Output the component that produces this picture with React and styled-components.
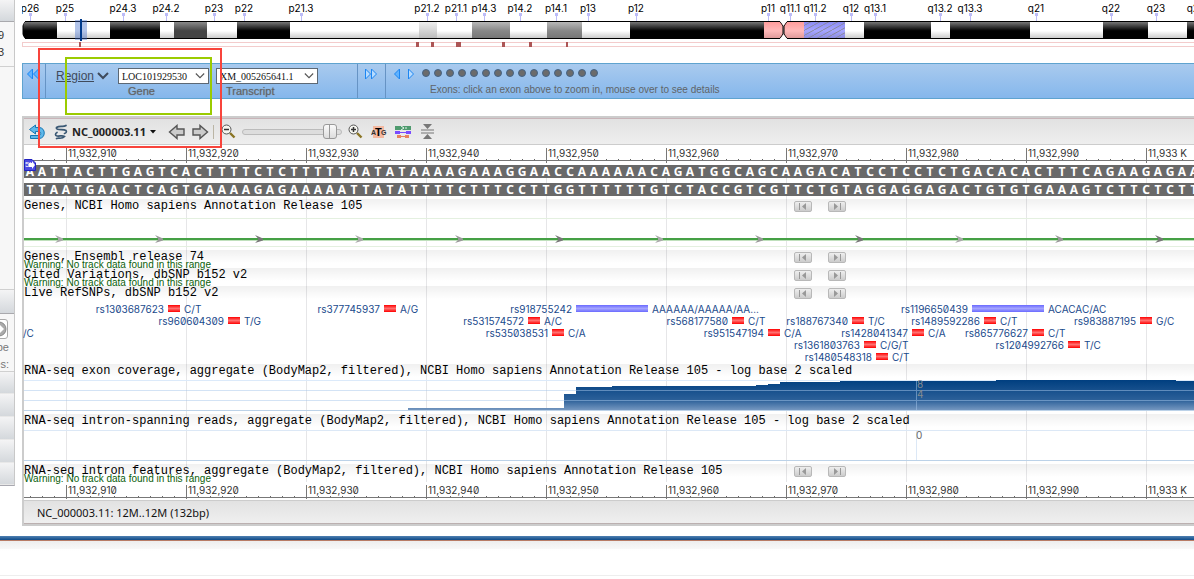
import React from "react";
import styled, { createGlobalStyle } from "styled-components";

const SANS = '"Liberation Sans", Arial, sans-serif';
const HUMAN = '"Noto Sans", Tahoma, sans-serif';
const MONO = '"Liberation Mono", "Courier New", monospace';
const TINY = 'Inter, "DejaVu Sans", sans-serif';

const GlobalStyle = createGlobalStyle`
  * { box-sizing: border-box; }
  body { margin: 0; background: #fff; font-family: ${SANS}; overflow: hidden; }
  button, select, input { margin: 0; padding: 0; font: inherit; }
`;

const Upper = styled.div`
  display: flex;
  align-items: flex-start;
  gap: 7px;
  height: 536px;
`;

/* ---------- left side panel ---------- */
const Side = styled.aside`
  flex: 0 0 15px;
  overflow: hidden;
  background: #f7f7f7;
  border-right: 1px solid #c8c8c8;
  border-bottom: 1px solid #a8a8b0;
`;
const SideHead = styled.div`
  height: ${(p) => p.$h}px;
  background: linear-gradient(#f4f4f5, #d4d8dc);
  border-bottom: 1px solid ${(p) => (p.$dark ? "#a9a9ad" : "#e8e8e8")};
`;
const SideBody = styled.div`
  display: flex;
  flex-direction: column;
  height: ${(p) => p.$h}px;
  padding-top: ${(p) => p.$top || 0}px;
  border-bottom: 1px solid #d0d0d0;
  color: ${(p) => p.$color};
  font-size: 11px;
  line-height: 17px;
  overflow: hidden;
`;
const SideText = styled.span`
  align-self: flex-end;
  margin-right: ${(p) => p.$r}px;
  white-space: nowrap;
`;
const GoButton = styled.button`
  display: flex;
  justify-content: flex-end;
  align-items: center;
  width: 30px;
  height: 20px;
  margin-left: -22px;
  flex: none;
  background: #fff;
  border: 1px solid #aaa;
  border-radius: 3px;
`;

/* ---------- main column ---------- */
const Main = styled.main`
  flex: 1;
  min-width: 0;
  overflow: hidden;
  position: relative;
`;
const Ideo = styled.svg`
  display: block;
  width: 100%;
  height: 63px;
  font: 10px ${TINY};
`;

const GeneBar = styled.div`
  display: flex;
  height: 36px;
  background: linear-gradient(#a9caee, #85b7ec);
  border: 1px solid #5fa3cf;
  border-right: 0;
  color: #5f6468;
  font-size: 11px;
`;
const BarPart = styled.div`
  display: flex;
  flex: ${(p) => (p.$w ? `0 0 ${p.$w}px` : "1")};
  gap: ${(p) => p.$gap || 0}px;
  padding: 2px 0 0 ${(p) => p.$pad}px;
  border-right: ${(p) => (p.$w ? "1px solid #6693c4" : "0")};
`;
const FieldGroup = styled.div`
  display: flex;
  gap: 7px;
  padding-top: 2px;
  margin-top: -2px;
`;
const BarButton = styled.button`
  display: flex;
  height: 16px;
  background: none;
  border: 0;
`;
const RegionButton = styled.button`
  display: flex;
  gap: 3px;
  height: 20px;
  width: 62px;
  background: none;
  border: 0;
  color: #3f4b5c;
  font-size: 12px;
  line-height: 20px;
  text-decoration: underline;
  svg { margin-top: 6px; flex: none; }
`;
const Field = styled.label`
  display: flex;
  flex-direction: column;
  width: ${(p) => p.$w}px;
  margin-top: 2px;
  line-height: 14px;
  text-shadow: 0 0 1px #7d8084;
  position: relative;
  svg { position: absolute; right: 4px; top: 4px; pointer-events: none; }
`;
const FieldName = styled.span`
  padding-left: 10px;
  order: 2;
`;
const Select = styled.select`
  appearance: none;
  height: 16px;
  width: 100%;
  padding-left: 3px;
  border: 1px solid #5c6874;
  border-radius: 0;
  background: #fff;
  color: #111;
  font: 10px "Liberation Serif", serif;
`;
const ExonCol = styled.div`
  display: flex;
  flex-direction: column;
  gap: 6px;
  padding: 3px 0 0 0;
  font-size: 10px;
  line-height: 12px;
`;
const ExonDots = styled.div`
  display: flex;
  gap: 4px;
  height: 9px;
`;
const ExonDot = styled.button`
  width: 8px;
  height: 8px;
  background: #6b6b6b;
  border: 1px solid #456384;
  border-radius: 50%;
`;
const ExonHint = styled.span`
  padding-left: 8px;
  white-space: nowrap;
`;

/* ---------- sequence viewer ---------- */
const Viewer = styled.section`
  margin-top: 17px;
  border: 2px solid #ccc;
  border-right: 0;
  position: relative;
`;
const Toolbar = styled.div`
  display: flex;
  align-items: center;
  height: 27px;
  padding-left: 5px;
  background: linear-gradient(#e2e2e2, #eee);
  border-top: 1px solid #c8b4b8;
  border-bottom: 1px solid #ccc;
`;
const ToolButton = styled.button`
  display: flex;
  align-items: center;
  gap: 4px;
  margin-right: ${(p) => p.$r}px;
  background: none;
  border: 0;
  color: #222;
  font: bold 11px ${HUMAN};
`;
const Separator = styled.span`
  width: 1px;
  height: 14px;
  margin-right: 7px;
  background: #bbb5a5;
`;
const Slider = styled.input`
  appearance: none;
  width: 100px;
  height: 16px;
  margin-right: 6px;
  background: none;
  &::-webkit-slider-runnable-track {
    height: 6px;
    background: #ddd;
    border: 1px solid #bbb;
    border-radius: 3px;
  }
  &::-webkit-slider-thumb {
    appearance: none;
    width: 14px;
    height: 15px;
    margin-top: -6px;
    border: 1px solid #999;
    border-radius: 3px;
    background: linear-gradient(90deg, transparent 5px, #999 5px 6px, transparent 6px), linear-gradient(#fafafa, #ddd);
  }
`;

const Ruler = styled.div`
  display: flex;
  height: ${(p) => p.$h}px;
  padding: 3px 0 0 42px;
  overflow: hidden;
  background:
    linear-gradient(#777, #777) 0 15px / 100% 1px no-repeat,
    linear-gradient(90deg, transparent 6px, #666 6px 7px, transparent 7px) 0 14px / 12px 1px repeat-x,
    #fff;
`;
const Mark = styled.span`
  flex: 0 0 120px;
  height: ${(p) => p.$h}px;
  padding-left: 1px;
  border-left: 1px solid #777;
  color: #333;
  font: 10px/10px ${TINY};
  font-feature-settings: "zero";
`;
const Canvas = styled.div`
  position: relative;
  background: linear-gradient(90deg, #e6e6e8 1px, transparent 1px) 42px 0 / 120px 100%;
`;
const Strand = styled.div`
  display: flex;
  height: 13px;
  margin-bottom: ${(p) => p.$b}px;
  background: #696969;
  color: #fff;
  font: bold 12px/14px ${HUMAN};
`;
const Base = styled.span`
  flex: 0 0 12px;
  text-align: center;
`;
const FivePrime = styled.svg`
  position: absolute;
  left: 0;
  top: 41px;
  z-index: 1;
`;
const Track = styled.div`
  height: ${(p) => p.$h}px;
`;
const TrackHead = styled.div`
  display: flex;
  height: ${(p) => p.$h || 13}px;
  background: linear-gradient(rgba(0, 0, 0, 0.06), transparent 13px);
`;
const TrackName = styled.span`
  min-width: 770px;
  color: #000;
  font: 12px/15px ${MONO};
  white-space: nowrap;
`;
const NavButton = styled.button`
  display: flex;
  justify-content: center;
  align-items: center;
  width: 18px;
  height: 11px;
  margin: 2px 16px 0 0;
  background: linear-gradient(#eee, #ccc);
  border: 1px solid #b8b8b8;
  border-radius: 2px;
`;
const Warning = styled.div`
  height: 5px;
  color: #0a600a;
  font: 10px/4px ${SANS};
`;
const Plot = styled.svg`
  display: block;
  width: 100%;
  font: 10px ${TINY};
`;
const Lanes = styled.div`
  height: 62px;
  padding-top: 2px;
`;
const Lane = styled.div`
  position: relative;
  height: 12px;
`;
const Snp = styled.div`
  position: absolute;
  top: 2px;
  height: 7px;
  background: ${(p) =>
    p.$long ? "linear-gradient(#6a6aff, #a4a4ff 50%, #6a6aff)" : "linear-gradient(#f00, #ff7070 50%, #f00)"};
  color: #1a4a8c;
  font: 10px/8px ${TINY};
  font-feature-settings: "zero";
`;
const SnpId = styled.a`
  position: absolute;
  right: calc(100% + 4px);
  color: inherit;
  text-decoration: none;
`;
const Allele = styled.span`
  position: absolute;
  left: calc(100% + 4px);
  white-space: nowrap;
`;
const Status = styled.div`
  height: 24px;
  padding-left: 13px;
  background: linear-gradient(#e2e2e2, #efefef);
  border-top: 1px solid #ccc;
  border-bottom: 1px solid #bbb0b0;
  color: #111;
  font: 11px/24px ${HUMAN};
`;
const Highlight = styled.div`
  position: absolute;
  left: ${(p) => p.$x}px;
  top: ${(p) => p.$y}px;
  width: ${(p) => p.$w}px;
  height: ${(p) => p.$h}px;
  border: 2px solid ${(p) => p.$c};
  pointer-events: none;
  z-index: 2;
`;
const Footer = styled.footer`
  height: 43px;
  background:
    linear-gradient(#4f80b2, #0f4a88) 0 0 / 100% 4px no-repeat,
    linear-gradient(#b87c66, #b87c66) 0 4px / 100% 1px no-repeat,
    linear-gradient(#eee, #f8f8f8) 0 5px / 100% 8px no-repeat,
    linear-gradient(#eee, #eee) 0 39px / 100% 1px no-repeat,
    linear-gradient(#fafafa, #fff 16px);
`;

/* ---------- data ---------- */
const BANDS = [
  [1, 34, "k"], [35, 53, "w"], [88, 50, "k"], [138, 14, "w"], [152, 33, "d"], [185, 30, "w"],
  [215, 53, "k"], [268, 129, "w"], [397, 18, "l"], [415, 35, "w"], [450, 38, "g"], [488, 37, "w"],
  [525, 35, "g"], [560, 48, "w"], [608, 134, "k"], [742, 19, "p"], [762, 20, "p"], [782, 41, "h"],
  [823, 19, "w"], [842, 67, "k"], [909, 19, "w"], [928, 80, "k"], [1008, 73, "w"], [1081, 45, "k"],
  [1126, 39, "w"], [1165, 60, "k"],
];
const SHADES = {
  k: ["#777", "#000", "#000"], w: ["#fff", "#fff", "#ccc"], d: ["#8a8a8a", "#444", "#444"],
  l: ["#eee", "#d4d4d4", "#bbb"], g: ["#b8b8b8", "#888", "#777"], p: ["#ff9c9c", "#ffb9b9", "#e09a9a"],
  h: ["#8c8cf4", "#a6a6ff", "#8c8ce0"],
};
const BAND_NAMES = [
  ["p26", 8], ["p25", 43], ["p24.3", 101], ["p24.2", 144], ["p23", 192], ["p22", 222], ["p21.3", 279],
  ["p21.2", 405], ["p21.1", 434], ["p14.3", 462], ["p14.2", 498], ["p14.1", 534], ["p13", 566],
  ["p12", 614], ["p11", 746], ["q11.1", 768], ["q11.2", 793], ["q12", 829], ["q13.1", 853],
  ["q13.2", 918], ["q13.3", 948], ["q21", 1014], ["q22", 1089], ["q23", 1134], ["q24", 1174],
];
const HITS = [[57, 2], [394, 3], [409, 3], [434, 5], [480, 3], [507, 3], [544, 2]];
const MARKS = ["11,932,910", "11,932,920", "11,932,930", "11,932,940", "11,932,950", "11,932,960",
  "11,932,970", "11,932,980", "11,932,990", "11,933 K"];
const SEQ =
  "AATTACTTGAGTCACTTTTCTCTTTTTAATATAAAAGAAAGGAACCAAAAAACAGATGGCAGCAAGACATCCTCCTCTGACACACTTTCAGAAGAGAA";
const PAIR = { A: "T", T: "A", C: "G", G: "C" };
const SNPS = [
  [[144, 12, "rs1303687623", "C/T"], [360, 12, "rs377745937", "A/G"],
    [552, 72, "rs918755242", "AAAAAA/AAAAA/AA…"], [948, 72, "rs1196650439", "ACACAC/AC"]],
  [[204, 12, "rs960604309", "T/G"], [504, 12, "rs531574572", "A/C"], [708, 12, "rs568177580", "C/T"],
    [828, 12, "rs188767340", "T/C"], [960, 12, "rs1489592286", "C/T"], [1116, 12, "rs983887195", "G/C"]],
  [[-17, 12, "", "/C"], [528, 12, "rs535038531", "C/A"], [744, 12, "rs951547194", "C/A"],
    [888, 12, "rs1428041347", "C/A"], [1008, 12, "rs865776627", "C/T"]],
  [[840, 12, "rs1361803763", "C/G/T"], [1044, 12, "rs1204992766", "T/C"]],
  [[852, 12, "rs1480548318", "C/T"]],
];
/* [x, width, height] of each coverage step */
const COVERAGE = [[384, 156, 3], [540, 12, 17], [552, 36, 24], [588, 144, 25], [732, 12, 26], [744, 12, 27],
  [756, 60, 29], [816, 156, 30], [972, 180, 31], [1152, 400, 30]];

/* ---------- parts ---------- */
const Ideogram = () => (
  <Ideo>
    <defs>
      {Object.entries(SHADES).map(([k, [a, b, c]]) => (
        <linearGradient key={k} id={`band-${k}`} x1="0" y1="0" x2="0" y2="1">
          <stop offset="0" stopColor={a} />
          <stop offset=".55" stopColor={b} />
          <stop offset="1" stopColor={c} />
        </linearGradient>
      ))}
      <pattern id="hatch" width="9" height="5" patternUnits="userSpaceOnUse">
        <path d="M0 5L9 0" stroke="#8a8a9c" />
      </pattern>
    </defs>
    {BAND_NAMES.map(([name, x]) => (
      <g key={name}>
        <text x={x} y="12" textAnchor="middle" fill="#000">{name}</text>
        <path d={`M${x - 1} 13h3v3h-1v5h-1v-5h-1z`} fill="#bcbcf8" />
      </g>
    ))}
    {BANDS.map(([x, w, kind]) => (
      <rect key={x} x={x} y="22" width={w} height="16" fill={`url(#band-${kind})`} />
    ))}
    <rect x="782" y="22" width="41" height="16" fill="url(#hatch)" />
    <path d="M3 21.5H758L761 26V34L758 38.5H3L1 36V24ZM2000 21.5H765L762 26V34L765 38.5H2000" fill="none" stroke="#000" />
    <path d="M0 21h3l-3 5zM0 39h3l-3-5zM758 21h7l-3 4h-1zM758 39h7l-3-4h-1z" fill="#fff" />
    <path d="M0 42.5H2000M0 46.5H2000M.5 42v5" stroke="#f3cccc" />
    {HITS.map(([x, w]) => <rect key={x} x={x} y="42" width={w} height="5" fill="#ac5555" />)}
    <rect x="53" y="20" width="12" height="20" fill="#3c6ac8" opacity=".4" />
    <rect x="58" y="19" width="2" height="22" fill="#003a8c" />
  </Ideo>
);

const Triangles = ({ dir, double }) => (
  <svg width={double ? 14 : 9} height="16" viewBox={double ? "0 0 14 16" : "0 0 9 16"}
    transform={dir === "left" ? "scale(-1 1)" : undefined}>
    <g fill={dir === "right" ? "#b8dcff" : "#5fb2ff"} stroke="#1c86f2">
      <path d="M1.500 3L6.500 8L1.500 13z" />
      {double && <path d="M7.500 3L12.500 8L7.500 13z" />}
    </g>
  </svg>
);
const Chevron = ({ color, wide }) => (
  <svg width={wide ? 12 : 10} height="8" viewBox="0 0 12 8" fill="none" stroke={color} strokeWidth={wide ? 2 : 1.3}>
    <path d="M1 1L6 6L11 1" />
  </svg>
);
const UndoIcon = () => (
  <svg width="17" height="16" viewBox="0 0 17 16" stroke="#1677b4" strokeLinejoin="round">
    <path d="M.500 5.500L6.500 1V3.500H10C17 3.500 17 14.500 10 14.500H1.500V11.500H9.500C12.500 11.500 12.500 7.500 9.500 7.500H6.500V10Z" fill="#5fb8ea" />
  </svg>
);
const HelixIcon = () => (
  <svg width="14" height="16" viewBox="0 0 14 16" fill="none" stroke="#3a5874" strokeWidth="1.700" strokeLinecap="round">
    <path d="M12 1.500C9 3.500 6 1 2.500 3.500C1.500 6.500 9 5 12 6.500C13 8 12 9 10.500 9.500" />
    <path d="M3 8.500C1 9.500 1 11.500 3 12C6 12.500 8 11 10.500 12.500C8 15.500 5 13.500 2.500 14.500" />
  </svg>
);
const ArrowIcon = ({ left }) => (
  <svg width="17" height="16" viewBox="0 0 17 16" transform={left ? "scale(-1 1)" : undefined}>
    <path d="M1 5H8V1.500L15.500 8L8 14.500V11H1z" fill="#ccc" stroke="#555" strokeWidth="1.400" />
  </svg>
);
const Magnifier = ({ plus }) => (
  <svg width="15" height="15" viewBox="0 0 15 15" fill="none">
    <path d="M9 9L13.500 13.500" stroke="#8a7424" strokeWidth="2.400" />
    <circle cx="5.500" cy="5.500" r="4.500" fill="#f6f6f0" stroke="#555" />
    <path d={plus ? "M3 5.500H8M5.500 3V8" : "M3 5.500H8"} stroke="#333" strokeWidth="1.500" />
  </svg>
);
const AtgIcon = () => (
  <svg width="16" height="14" viewBox="0 0 16 14" fontFamily="Liberation Sans, sans-serif" fontWeight="bold">
    <rect x="2" y="1" width="11" height="12" fill="#f4b8a0" />
    <text x="0" y="10" fontSize="7" fill="#333">A</text>
    <text x="4" y="11" fontSize="11" fill="#000">T</text>
    <text x="10" y="10" fontSize="7" fill="#333">G</text>
  </svg>
);
const TracksIcon = () => (
  <svg width="16" height="14" viewBox="0 0 16 14">
    <path d="M0 1H16V5H0z" fill="#4e9a6e" />
    <path d="M6 1L9 3L6 5M10 3h2" stroke="#e8f4ec" fill="none" />
    <path d="M0 6h5v3H0zM11 6h5v3h-5zM5 7h6v1H5z" fill="#7a4cff" />
    <path d="M2 10h4v3H2zM10 10h4v3h-4zM6 11h4v1H6z" fill="#e8825e" />
  </svg>
);
const CollapseIcon = () => (
  <svg width="13" height="15" viewBox="0 0 13 15" fill="#777">
    <path d="M2 0H11L6.500 5zM0 5.500h13v1H0zM0 8.500h13v1H0zM6.500 10L11 15H2z" />
  </svg>
);

const Head = ({ name, nav, h }) => (
  <TrackHead $h={h}>
    <TrackName>{name}</TrackName>
    {nav && (
      <>
        <NavButton aria-label="Previous">
          <svg width="8" height="7" fill="#999"><path d="M0 0h1v7H0zM7 0v7L3 3.500z" /></svg>
        </NavButton>
        <NavButton aria-label="Next">
          <svg width="8" height="7" fill="#999"><path d="M7 0h1v7H7zM1 0v7L5 3.500z" /></svg>
        </NavButton>
      </>
    )}
  </TrackHead>
);
const RulerRow = ({ h, tick }) => (
  <Ruler $h={h}>{MARKS.map((m) => <Mark key={m} $h={tick}>{m}</Mark>)}</Ruler>
);
const NO_DATA = "Warning: No track data found in this range";

export default function App() {
  return (
    <>
      <GlobalStyle />
      <Upper>
        <Side>
          <SideHead $h={22} $dark />
          <SideBody $h={45} $top={5} $color="#333">
            <SideText $r={10}>9</SideText>
            <SideText $r={10}>3</SideText>
          </SideBody>
          <SideBody $h={223} $color="#333" />
          <SideHead $h={24} $dark />
          <SideBody $h={58} $top={5} $color="#777">
            <GoButton aria-label="Go">
              <svg width="16" height="16" viewBox="0 0 16 16">
                <circle cx="8" cy="8" r="7" fill="#aaa" stroke="#888" />
                <path d="M2 6h6V3l5 5l-5 5v-3H2z" fill="#fff" />
              </svg>
            </GoButton>
            <SideText $r={5}>pe</SideText>
            <SideText $r={5}>es:</SideText>
          </SideBody>
          {[22, 23, 23, 23, 22].map((h, i) => <SideHead key={i} $h={h} />)}
        </Side>
        <Main>
          <Ideogram />
          <GeneBar>
            <BarPart $w={23} $pad={3}>
              <BarButton aria-label="Previous gene"><Triangles dir="left" double /></BarButton>
            </BarPart>
            <BarPart $w={312} $pad={10}>
              <RegionButton>Region<Chevron color="#3f4b5c" wide /></RegionButton>
              <FieldGroup>
                <Field $w={91}>
                  <FieldName>Gene</FieldName>
                  <Select><option>LOC101929530</option></Select>
                  <Chevron color="#555" />
                </Field>
                <Field $w={102}>
                  <FieldName>Transcript</FieldName>
                  <Select><option>XM_005265641.1</option></Select>
                  <Chevron color="#555" />
                </Field>
              </FieldGroup>
            </BarPart>
            <BarPart $w={28} $pad={6}>
              <BarButton aria-label="Next gene"><Triangles dir="right" double /></BarButton>
            </BarPart>
            <BarPart $pad={6} $gap={6}>
              <BarButton aria-label="Previous exon"><Triangles dir="left" /></BarButton>
              <BarButton aria-label="Next exon"><Triangles dir="right" /></BarButton>
              <ExonCol>
                <ExonDots>
                  {Array.from({ length: 15 }, (_, i) => <ExonDot key={i} aria-label={`Exon ${i + 1}`} />)}
                </ExonDots>
                <ExonHint>Exons: click an exon above to zoom in, mouse over to see details</ExonHint>
              </ExonCol>
            </BarPart>
          </GeneBar>

          <Viewer>
            <Toolbar>
              <ToolButton $r={8} aria-label="Undo"><UndoIcon /></ToolButton>
              <ToolButton $r={12}>
                <HelixIcon />NC_000003.11
                <svg width="6" height="4"><path d="M0 0h6L3 3.500z" fill="#111" /></svg>
              </ToolButton>
              <ToolButton $r={7} aria-label="Pan left"><ArrowIcon left /></ToolButton>
              <ToolButton $r={4} aria-label="Pan right"><ArrowIcon /></ToolButton>
              <Separator />
              <ToolButton $r={6} aria-label="Zoom out"><Magnifier /></ToolButton>
              <Slider type="range" aria-label="Zoom" defaultValue="95" />
              <ToolButton $r={8} aria-label="Zoom in"><Magnifier plus /></ToolButton>
              <ToolButton $r={8} aria-label="Zoom to sequence"><AtgIcon /></ToolButton>
              <ToolButton $r={10} aria-label="Tracks"><TracksIcon /></ToolButton>
              <ToolButton $r={0} aria-label="Collapse"><CollapseIcon /></ToolButton>
            </Toolbar>
            <RulerRow h={20} tick={15} />
            <FivePrime width="12" height="12" viewBox="0 0 12 12">
              <path d="M.5.5H8L11.500 4V11.500H.5z" fill="#4a4ae0" stroke="#2222c0" />
              <path d="M5 4h3V2l3 4l-3 4V8H5z" fill="#fff" />
              <text x="1" y="8" fontSize="8" fill="#fff" fontFamily="Liberation Sans, sans-serif">5'</text>
            </FivePrime>
            <Canvas>
              <Strand $b={5}>{[...SEQ].map((b, i) => <Base key={i}>{b}</Base>)}</Strand>
              <Strand $b={3}>{[...SEQ].map((b, i) => <Base key={i}>{PAIR[b]}</Base>)}</Strand>
              <Track $h={51}>
                <Head nav name="Genes, NCBI Homo sapiens Annotation Release 105" />
                <Plot height="38">
                  <defs>
                    <pattern id="strand" width="300" height="9" y="23" x="31" patternUnits="userSpaceOnUse">
                      {["#aaa", "#999", "#777"].map((c, i) => (
                        <path key={c} transform={`translate(${i * 100} 0)`} d="M0 0L8 3.500V5.500L0 8L3 5V3.500z" fill={c} />
                      ))}
                    </pattern>
                  </defs>
                  <path d="M0 6.500H2000M0 34.500H2000" stroke="#e4f0e0" />
                  <rect y="26" width="100%" height="3" fill="#bfe0bc" />
                  <rect y="26" width="100%" height="2" fill="#45a045" />
                  <rect y="23" width="100%" height="9" fill="url(#strand)" />
                </Plot>
              </Track>
              <Track $h={18}>
                <Head nav name="Genes, Ensembl release 74" />
                <Warning>{NO_DATA}</Warning>
              </Track>
              <Track $h={18}>
                <Head nav name="Cited Variations, dbSNP b152 v2" />
                <Warning>{NO_DATA}</Warning>
              </Track>
              <Track $h={78}>
                <Head nav h={15} name="Live RefSNPs, dbSNP b152 v2" />
                <Lanes>
                  {SNPS.map((lane, i) => (
                    <Lane key={i}>
                      {lane.map(([x, w, id, allele]) => (
                        <Snp key={x} $long={w > 12} style={{ left: x, width: w }}>
                          {id && <SnpId href={`#${id}`}>{id}</SnpId>}
                          <Allele>{allele}</Allele>
                        </Snp>
                      ))}
                    </Lane>
                  ))}
                </Lanes>
              </Track>
              <Track $h={50}>
                <Head name="RNA-seq exon coverage, aggregate (BodyMap2, filtered), NCBI Homo sapiens Annotation Release 105 - log base 2 scaled" />
                <Plot height="37">
                  <defs>
                    <linearGradient id="cover" gradientUnits="userSpaceOnUse" x1="0" y1="3" x2="0" y2="34">
                      <stop offset="0" stopColor="#003f80" />
                      <stop offset=".65" stopColor="#2c6099" />
                      <stop offset="1" stopColor="#7c9cc4" />
                    </linearGradient>
                  </defs>
                  <path d="M0 3.500H2000" stroke="#dceafa" />
                  {COVERAGE.map(([x, w, h]) => (
                    <rect key={x} x={x} y={34 - h} width={w} height={h} fill="url(#cover)" />
                  ))}
                  <path d="M0 13.500H2000M0 23.500H2000M892.500 4V33" stroke="#a8c8ec" opacity=".5" />
                  <path d="M0 33.500H2000" stroke="#bcd2e8" />
                  <text x="893" y="11" fill="#858b90">8</text>
                  <text x="893" y="21" fill="#858b90">4</text>
                </Plot>
              </Track>
              <Track $h={50}>
                <Head name="RNA-seq intron-spanning reads, aggregate (BodyMap2, filtered), NCBI Homo sapiens Annotation Release 105 - log base 2 scaled" />
                <Plot height="37">
                  <path d="M0 3.500H2000M892.500 4V33" stroke="#dce8f6" />
                  <path d="M0 33.500H2000" stroke="#bcd2e8" />
                  <text x="892" y="12" fill="#666">0</text>
                </Plot>
              </Track>
              <Track $h={18}>
                <Head nav name="RNA-seq intron features, aggregate (BodyMap2, filtered), NCBI Homo sapiens Annotation Release 105" />
                <Warning>{NO_DATA}</Warning>
              </Track>
            </Canvas>
            <RulerRow h={18} tick={14} />
            <Status>NC_000003.11: 12M..12M (132bp)</Status>
          </Viewer>
          <Highlight $x={16} $y={48} $w={184} $h={100} $c="#f8443c" />
          <Highlight $x={43} $y={57} $w={147} $h={58} $c="#9bcb00" />
        </Main>
      </Upper>
      <Footer />
    </>
  );
}
